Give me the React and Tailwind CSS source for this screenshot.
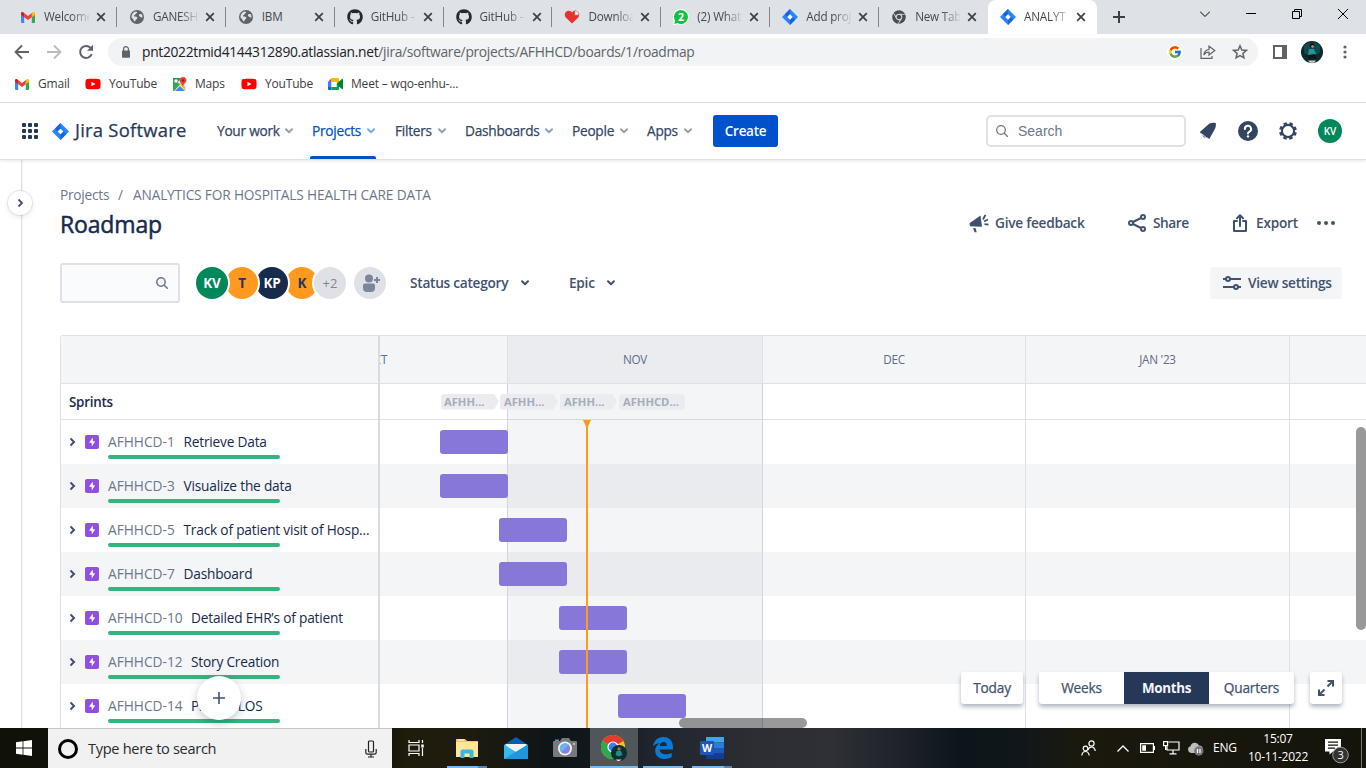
import React from "react";
import { FaGithub, FaYoutube, FaChrome } from "react-icons/fa";
import { FcGoogle } from "react-icons/fc";

const Chevron = ({ className = "" }) => (
  <svg viewBox="0 0 10 8" className={"h-2 w-2.5 shrink-0 " + className} fill="none" stroke="currentColor" strokeWidth="2" strokeLinecap="round" strokeLinejoin="round">
    <path d="M2 2.3 5 5.3 8 2.3" />
  </svg>
);

const GmailIcon = () => (
  <svg viewBox="0 0 14 11" className="h-[11px] w-[14px]">
    <path d="M0 2v8a1 1 0 0 0 1 1h2.2V4.6z" fill="#4285f4" />
    <path d="M14 2v8a1 1 0 0 1-1 1h-2.200V4.600z" fill="#34a853" />
    <path d="M10.800 1v4.200L14 2.800V1.500C14 .1 12.500-.3 11.600.4z" fill="#fbbc04" />
    <path d="M3.200 5.200V1L7 3.900 10.800 1v4.200L7 8z" fill="#ea4335" />
    <path d="M0 1.500v1.300l3.200 2.400V1L2.400.4C1.500-.3 0 .1 0 1.500z" fill="#c5221f" />
  </svg>
);

const GlobeIcon = () => (
  <svg viewBox="0 0 14 14" className="size-[14px]">
    <circle cx="7" cy="7" r="7" fill="#5f6368" />
    <path d="M5.500 1.400c2 .4 2.200 1.200 1 1.900-1.300.6-.6 1.600-2 1.900-1.200.3-.5 1.400.7 1.400 1.800 0 2.300.8 2 1.900-.3 1-1.600 1-1.800 2.300-.1 1-1 .9-1.600-.2C3.200 9.400 2.900 8.200 1.400 7.400 1.500 4.200 3 2 5.500 1.400zM9.500 4.200c1-.2 1.800-.3 2.300.3.6.9.800 1.700.7 2.800-.6.9-1.600 0-2.400-.5C9 6.300 8.300 4.600 9.500 4.200z" fill="#dee1e6" />
  </svg>
);

const HeartIcon = () => (
  <svg viewBox="0 0 16 15" className="h-[14px] w-4">
    <path d="M8 14.500 1.300 8C-.6 6 0 1.200 4 .8c2-.2 3.300.8 4 2 .5-1 1.400-1.700 2.500-2L15.600 6c0 .9-.4 1.500-.9 2z" fill="#e5322d" />
    <path d="M10.800 1c1.300-.3 2.600.3 3.500 1.300.8 1 1.100 2 1.100 3.200h-4.600z" fill="#fff" stroke="#e5322d" strokeWidth=".7" />
  </svg>
);

const WhatsIcon = () => (
  <svg viewBox="0 0 16 16" className="size-4">
    <path d="M8 0a8 8 0 1 1-3.600 15.200L0 16l.9-4.200A8 8 0 0 1 8 0z" fill="#fff" />
    <path d="M8 1a7 7 0 1 1-3.500 13.100L1.300 14.900l.7-3.300A7 7 0 0 1 8 1z" fill="#12c143" />
    <text x="8" y="11.800" textAnchor="middle" fontSize="10.500" fontWeight="700" fill="#fff" fontFamily="Open Sans, sans-serif">2</text>
  </svg>
);

const JiraIcon = ({ className = "size-4" }) => (
  <svg viewBox="0 0 16 16" className={className}>
    <path d="M8 0 16 8 8 16 0 8z" fill="#2684ff" />
    <path d="M8 0v5.200L5.200 8 2.700 5.300z" fill="#0f5fdb" opacity=".8" />
    <path d="M8 16v-5.200L10.800 8l2.500 2.700z" fill="#0f5fdb" opacity=".8" />
    <path d="M8 5.300 10.700 8 8 10.700 5.300 8z" fill="#fff" />
  </svg>
);

const MapsIcon = () => (
  <svg viewBox="0 0 15 15" className="size-[15px]">
    <path d="M1.500 1.500h7L11 8l3 1v5H1.500z" fill="#e8eaed" />
    <path d="M1 1h8L1 11z" fill="#1e9e57" />
    <path d="M1 11V1.500l7 6L2 14c-.6 0-1-.5-1-1z" fill="#34a853" />
    <path d="M3 14l5-5 5 5z" fill="#4285f4" />
    <path d="M7 6.500 13 13v-3L9 6z" fill="#fbbc04" />
    <circle cx="4" cy="4" r="1.700" fill="#fff" />
    <path d="M11 0c2 0 3.500 1.500 3.500 3.300C14.500 5.500 11.700 6.500 11 10c-.7-3.500-3.500-4.500-3.500-6.700C7.500 1.500 9 0 11 0z" fill="#ea4335" />
    <circle cx="11" cy="3.400" r="1.200" fill="#8c1d18" />
  </svg>
);

const MeetIcon = () => (
  <svg viewBox="0 0 15 12" className="h-3 w-[15px]">
    <path d="M3.500 0v4H0z" fill="#ea4335" />
    <path d="M0 4h3.500v5H0z" fill="#2684fc" />
    <path d="M0 9h3.500v3H1a1 1 0 0 1-1-1z" fill="#0066da" />
    <path d="M3.500 0H10a1 1 0 0 1 1 1v4L8.500 6.500V4h-5z" fill="#ffba00" />
    <path d="M3.500 12V9h5V6.500L11 6v5a1 1 0 0 1-1 1z" fill="#00ac47" />
    <path d="M11 3.500 14 1c.5-.4 1-.2 1 .4v9.200c0 .6-.5.8-1 .4L11 8.500 8.500 6z" fill="#00832d" />
    <path d="M3.500 4h5v5h-5z" fill="#fff" />
  </svg>
);

const CloseX = () => (
  <svg viewBox="0 0 10 10" className="size-[10px] shrink-0" stroke="#3c4043" strokeWidth="1.700">
    <path d="M1.200 1.200 8.800 8.800M8.800 1.200 1.200 8.800" />
  </svg>
);

const github = <FaGithub className="size-4 text-[#24292f]" />;
const tabs = [
  { icon: <GmailIcon />, title: "Welcome" },
  { icon: <GlobeIcon />, title: "GANESH" },
  { icon: <GlobeIcon />, title: "IBM" },
  { icon: github, title: "GitHub -" },
  { icon: github, title: "GitHub -" },
  { icon: <HeartIcon />, title: "Downloa" },
  { icon: <WhatsIcon />, title: "(2) What" },
  { icon: <JiraIcon />, title: "Add proj" },
  { icon: <FaChrome className="size-[14px] text-[#4a4d51]" />, title: "New Tab" },
  { icon: <JiraIcon />, title: "ANALYT", active: true },
];

function TabStrip() {
  return (
    <div className="flex h-[34px] shrink-0 bg-[#dee1e6] pl-2">
      {tabs.map((t, i) => (
        <div key={i} className={"relative flex h-[34px] w-[108.9px] shrink-0 items-center pl-3 " + (t.active ? "rounded-t-lg bg-white" : "")}>
          <span className="flex w-4 shrink-0 items-center justify-center">{t.icon}</span>
          <span className={"ml-2 w-[45px] whitespace-nowrap text-[11.700px] tracking-[-0.2px] text-[#45494d] " + (t.title === "IBM" ? "" : "[mask-image:linear-gradient(90deg,#000_60%,#0000_104%)]")}>{t.title}</span>
          <span className="ml-[7px] flex"><CloseX /></span>
          {!t.active && i < 8 && <span className="absolute right-0 top-[7px] h-5 w-px bg-[#80868b]" />}
        </div>
      ))}
      <svg viewBox="0 0 14 14" className="ml-[15px] mt-2.5 size-[14px]" stroke="#3c4043" strokeWidth="2"><path d="M7 1v12M1 7h12" /></svg>
      <div className="ml-auto mt-2 flex h-3 items-center gap-9 pr-[18px] text-black">
        <svg viewBox="0 0 10 6" className="h-1.5 w-2.5" fill="none" stroke="currentColor"><path d="M0 .5 5 5.500 10 .5" /></svg>
        <svg viewBox="0 0 10 2" className="h-0.5 w-2.5" stroke="currentColor"><path d="M0 .5h10" /></svg>
        <svg viewBox="0 0 10 10" className="size-2.5" fill="none" stroke="currentColor"><path d="M.5 2.500h7v7h-7zM2.500 2.500V.5h7v7h-2" /></svg>
        <svg viewBox="0 0 10 10" className="size-2.5" fill="none" stroke="currentColor"><path d="M0 0 10 10M10 0 0 10" /></svg>
      </div>
    </div>
  );
}

function AddressBar() {
  return (
    <div className="flex h-9 shrink-0 items-center pl-[14px] text-[#5f6368]">
      <svg viewBox="0 0 16 16" className="size-4" fill="none" stroke="currentColor" strokeWidth="1.800"><path d="M15 8H2M8 1.500 1.500 8 8 14.500" /></svg>
      <svg viewBox="0 0 16 16" className="ml-4 size-4 text-[#b9bbbe]" fill="none" stroke="currentColor" strokeWidth="1.800"><path d="M1 8h13M8 1.500 14.500 8 8 14.500" /></svg>
      <svg viewBox="0 0 16 16" className="ml-4 size-4" fill="none" stroke="currentColor" strokeWidth="2"><path d="M13.700 10.200A6 6 0 1 1 12.500 3.800L14 5.500" /><path d="M15 .8v6H9z" fill="currentColor" stroke="none" /></svg>
      <div className="ml-[14px] flex h-7 w-[1150px] items-center rounded-full bg-[#f1f3f4] pl-[14px]">
        <svg viewBox="0 0 8 12" className="h-3 w-2"><path d="M0 4.500h8V11a.8.8 0 0 1-.8.8H.8A.8.8 0 0 1 0 11z" fill="#5f6368" /><path d="M1.600 5V3a2.400 2.400 0 0 1 4.800 0v2" fill="none" stroke="#5f6368" strokeWidth="1.200" /></svg>
        <span className="ml-3 whitespace-nowrap pt-px text-[13.800px] tracking-[-0.3px]"><span className="text-[#202124]">pnt2022tmid4144312890.atlassian.net</span>/jira/software/projects/AFHHCD/boards/1/roadmap</span>
        <span className="ml-auto flex size-4 items-center justify-center rounded-full bg-white"><FcGoogle className="size-[14px]" /></span>
        <svg viewBox="0 0 16 14" className="ml-[17px] h-[14px] w-4" fill="none" stroke="currentColor" strokeWidth="1.200"><path d="M1 3v10.300h11V11M9 4.500V1.200L14.800 5.500 9 10V7C6.500 7 5 8 3.800 10 4.200 7 6 4.800 9 4.500z" /></svg>
        <svg viewBox="0 0 16 16" className="ml-4 mr-[10px] size-4" fill="none" stroke="currentColor" strokeWidth="1.500"><path d="M8 1.800 9.800 6l4.500.4-3.400 3 1 4.400L8 11.500l-3.900 2.300 1-4.400-3.400-3L6.200 6z" /></svg>
      </div>
      <svg viewBox="0 0 14 14" className="ml-[15px] size-[14px]"><path d="M0 0h14v14H0zM2 2v10h7V2z" fill="#5f6368" fillRule="evenodd" /></svg>
      <svg viewBox="0 0 22 22" className="ml-[14px] size-[22px]">
        <circle cx="11" cy="11" r="11" fill="#0d2b2f" />
        <path d="M3 5c4-4 12-5 16 0v6c-4 5-12 4-16 1z" fill="#114a4c" />
        <circle cx="11" cy="4.500" r="2.300" fill="#151515" /><circle cx="11.500" cy="5.500" r="1.300" fill="#c69a86" />
        <path d="M8 8h5l2 5-3 3-5-2z" fill="#26949a" />
        <path d="M7 14l7-1 2 5h-3l-2-2-3 3z" fill="#11151a" />
        <path d="M7 19.500h8l-2 2.200H9z" fill="#d7c6cc" />
      </svg>
      <svg viewBox="0 0 4 14" className="ml-5 h-[14px] w-1" fill="#5f6368"><circle cx="2" cy="2" r="1.600" /><circle cx="2" cy="7" r="1.600" /><circle cx="2" cy="12" r="1.600" /></svg>
    </div>
  );
}

const youtube = <FaYoutube className="size-[16px] text-[#ff0000]" />;
function Bookmarks() {
  const items = [
    ["w-[71px]", <GmailIcon key="a" />, "Gmail"],
    ["w-[86px]", youtube, "YouTube"],
    ["w-[70px]", <MapsIcon key="c" />, "Maps"],
    ["w-[86px]", youtube, "YouTube"],
    ["w-[140px]", <MeetIcon key="e" />, "Meet – wqo-enhu-..."],
  ];
  return (
    <div className="flex h-[33px] shrink-0 items-center border-b border-[#dadce0] pb-1 pl-[14px] text-[12px] tracking-[-0.18px] text-[#3c4043]">
      {items.map(([w, icon, label], i) => (
        <div key={i} className={"flex shrink-0 items-center whitespace-nowrap " + w}>
          <span className="mr-2 flex w-4 items-center justify-center">{icon}</span>{label}
        </div>
      ))}
    </div>
  );
}

const navItems = [
  ["w-[95px]", "w-[66px]", "Your work"],
  ["w-[83px]", "w-[53px]", "Projects"],
  ["w-[70px]", "w-[41px]", "Filters"],
  ["w-[107px]", "w-[78px]", "Dashboards"],
  ["w-[75px]", "w-[46px]", "People"],
  ["w-[66px]", "w-[35px]", "Apps"],
];

function JiraNav() {
  return (
    <div className="relative z-10 flex h-[56px] shrink-0 items-center bg-white pl-[22px] text-[#344563] shadow-[0_1px_0_#dfe1e6,0_2px_3px_#091e421c]">
      <svg viewBox="0 0 16 16" className="size-4" fill="#253858">
        {[0, 6, 12].map((y) => [0, 6, 12].map((x) => <rect key={x + "-" + y} x={x} y={y} width="4" height="4" rx="1" />))}
      </svg>
      <JiraIcon className="ml-[14px] size-[17px]" />
      <span className="ml-[6px] w-[142px] whitespace-nowrap pb-0.5 text-[18.400px] tracking-[0.25px] text-[#253858] [-webkit-text-stroke:0.25px]">Jira Software</span>
      {navItems.map(([w, tw, label]) => {
        const on = label === "Projects";
        return (
          <div key={label} className={"relative flex h-14 shrink-0 items-center whitespace-nowrap text-[13.700px] tracking-[-0.26px] [-webkit-text-stroke:0.25px] " + w + (on ? " text-[#0052cc]" : "")}>
            <span className={"pt-px " + tw}>{label}</span>
            <Chevron className="ml-px opacity-50" />
            {on && <span className="absolute -left-0.5 bottom-0 h-[3px] w-[66px] rounded-t-xs bg-[#0052cc]" />}
          </div>
        );
      })}
      <button className="h-8 w-[65px] rounded-[3px] bg-[#0052cc] text-[13.500px] font-semibold tracking-[-0.3px] text-white">Create</button>
      <div className="ml-auto flex h-8 w-[200px] items-center rounded-[5px] border-2 border-[#dfe1e6] pl-2 font-['Liberation_Sans',sans-serif] text-sm text-[#6b778c]">
        <svg viewBox="0 0 12 12" className="mr-2.5 size-3" fill="none" stroke="#6b778c" strokeWidth="1.300"><circle cx="5" cy="5" r="4.300" /><path d="M8.200 8.200 11.500 11.500" strokeLinecap="round" /></svg>
        Search
      </div>
      <svg viewBox="0 0 18 18" className="ml-[13px] size-[18px]" fill="#344563"><path d="M10.500 1.600c2-.9 4-1 6.300-.6.3 2.500 0 4.700-1.200 6.600L10.300 17 8 15.300C6.300 16 4.500 15.500 3.900 13.700L.8 10z" /><path d="M2.500 11.600 7.200 15.600" stroke="#fff" strokeWidth=".9" /></svg>
      <svg viewBox="0 0 20 20" className="ml-[21px] size-5"><circle cx="10" cy="10" r="10" fill="#344563" /><path d="M6.900 8a3.100 3.100 0 1 1 4.600 2.600c-1 .6-1.500 1-1.500 2" fill="none" stroke="#fff" strokeWidth="2" strokeLinecap="round" /><circle cx="10" cy="15.400" r="1.200" fill="#fff" /></svg>
      <svg viewBox="0 0 18 18" className="ml-[21px] size-[18px]" fill="none" stroke="#344563"><circle cx="9" cy="9" r="6.100" strokeWidth="2.200" /><circle cx="9" cy="9" r="7.700" strokeWidth="2.400" strokeDasharray="3.400 2.648" strokeDashoffset="-1.300" /></svg>
      <span className="ml-[21px] mr-6 flex size-6 items-center justify-center rounded-full bg-[#00875a] text-[10px] font-semibold text-white">KV</span>
    </div>
  );
}

const Avatar = ({ cls, children }) => (
  <span className={"relative -ml-0.5 flex size-8 shrink-0 items-center justify-center rounded-full text-[13.500px] font-bold tracking-[-0.2px] ring-2 ring-white " + cls}>{children}</span>
);

function PageHeader() {
  return (
    <>
      <div className="flex h-5 items-center pt-px text-[13.700px] tracking-[-0.16px] text-[#6b778c]">
        <span className="w-[58px] tracking-[-0.25px]">Projects</span><span className="w-[15px]">/</span>
        <span className="whitespace-nowrap">ANALYTICS FOR HOSPITALS HEALTH CARE DATA</span>
      </div>
      <div className="flex h-10 items-center text-[#42526e]">
        <h1 className="mb-0.5 mr-auto text-[23px] tracking-[-0.15px] text-[#172b4d] [-webkit-text-stroke:0.5px]">Roadmap</h1>
        <svg viewBox="0 0 20 19" className="mb-1 h-[19px] w-5" fill="#42526e"><path d="M11.500 1.500 13 12.800 1 12.300.5 9.300z" /><path d="M4 14l2.700.2 1 4H5.500z" /><path d="M14 5.500 16.500.8M15 7.500l4-2M15.500 10.200l4 .5" stroke="#42526e" strokeWidth="1.800" /></svg>
        <span className="mb-1 ml-[6px] w-[133px] text-[13.700px] font-semibold tracking-[-0.26px]">Give feedback</span>
        <svg viewBox="0 0 18 18" className="mb-1 size-[18px]" fill="none" stroke="#42526e" strokeWidth="2"><circle cx="3" cy="9" r="2" /><circle cx="15" cy="3" r="2" /><circle cx="15" cy="15" r="2" /><path d="m5 8 8-4M5 10l8 4" /></svg>
        <span className="mb-1 ml-[7px] w-[80px] text-[13.700px] font-semibold tracking-[-0.45px]">Share</span>
        <svg viewBox="0 0 14 18" className="mb-1 h-[18px] w-[14px]" fill="none" stroke="#42526e" strokeWidth="2" strokeLinecap="round" strokeLinejoin="round"><path d="M4 7H1v10h12V7h-3M7 12V1.500M4 4.200l3-3 3 3" /></svg>
        <span className="mb-1 ml-[9px] w-[61px] text-[13.700px] font-semibold tracking-[-0.26px]">Export</span>
        <svg viewBox="0 0 18 4" className="mb-1 mr-[31px] h-1 w-[18px]" fill="#42526e"><circle cx="2" cy="2" r="2" /><circle cx="9" cy="2" r="2" /><circle cx="16" cy="2" r="2" /></svg>
      </div>
      <div className="mt-[18px] flex h-10 items-center text-[#42526e]">
        <div className="mr-[18px] flex h-10 w-[120px] items-center justify-end rounded-[3px] border-2 border-[#dfe1e6] bg-[#fafbfc] pr-2.5">
          <svg viewBox="0 0 12 12" className="size-3" fill="none" stroke="#6b778c" strokeWidth="1.500"><circle cx="5" cy="5" r="4.200" /><path d="M8.200 8.200 11.300 11.300" strokeLinecap="round" /></svg>
        </div>
        <Avatar cls="z-[4] bg-[#00875a] text-white">KV</Avatar>
        <Avatar cls="z-[3] bg-[#ff991f] text-[#253858]">T</Avatar>
        <Avatar cls="z-[2] bg-[#172b4d] text-white">KP</Avatar>
        <Avatar cls="z-[1] bg-[#ff991f] text-[#253858]">K</Avatar>
        <span className="relative z-[2] -ml-1 flex size-8 items-center justify-center rounded-full bg-[#dfe1e6] pt-px text-[13px] text-[#7a869a] ring-2 ring-white">+2</span>
        <span className="ml-2 flex size-8 items-center justify-center rounded-full bg-[#dfe1e6]">
          <svg viewBox="0 0 18 19" className="ml-0.5 h-[19px] w-[18px]" fill="#7a869a"><circle cx="7" cy="4.500" r="4" /><path d="M1 11.500a2 2 0 0 1 2-2h8a2 2 0 0 1 2 2V14a4 4 0 0 1-4 4H5a4 4 0 0 1-4-4z" /><path d="M15 3v6M12 6h6" stroke="#7a869a" strokeWidth="2" /></svg>
        </span>
        <span className="ml-6 w-[110px] pt-px text-[13.700px] font-semibold tracking-[-0.28px]">Status category</span>
        <Chevron />
        <span className="ml-[39px] w-[37px] pt-px text-[13.700px] font-semibold tracking-[-0.28px]">Epic</span>
        <Chevron />
        <button className="ml-auto mr-6 flex h-8 w-[132px] items-center rounded-[3px] bg-[#f4f5f7] pl-[13px] text-[13.700px] font-semibold tracking-[-0.26px]">
          <svg viewBox="0 0 18 14" className="mr-[7px] h-[14px] w-[18px] shrink-0" fill="none" stroke="#42526e" strokeWidth="2"><circle cx="5" cy="3" r="2" /><path d="M0 3h3M7 3h11M0 11h11M15 11h3" /><circle cx="13" cy="11" r="2" /></svg>
          <span className="whitespace-nowrap pt-px">View settings</span>
        </button>
      </div>
    </>
  );
}

const epics = [
  { k: "AFHHCD-1", kw: "w-[75.5px]", title: "Retrieve Data", bar: "ml-[60px]" },
  { k: "AFHHCD-3", kw: "w-[75.5px]", title: "Visualize the data", bar: "ml-[60px]" },
  { k: "AFHHCD-5", kw: "w-[75.5px]", title: "Track of patient visit of Hosp...", bar: "ml-[119px]" },
  { k: "AFHHCD-7", kw: "w-[75.5px]", title: "Dashboard", bar: "ml-[119px]" },
  { k: "AFHHCD-10", kw: "w-[83px]", title: "Detailed EHR’s of patient", bar: "ml-[179px]" },
  { k: "AFHHCD-12", kw: "w-[83px]", title: "Story Creation", bar: "ml-[179px]" },
  { k: "AFHHCD-14", kw: "w-[83px]", title: "Predict LOS", bar: "ml-[238px]" },
];
const stripe = (i) => (i % 2 ? "bg-[#f4f5f7]" : "bg-white");

function EpicList() {
  return (
    <div className="w-[320px] shrink-0 border-l border-r-2 border-[#dfe1e6] border-r-[#d9dbe2]">
      <div className="h-12 border-b border-[#dfe1e6] bg-[#f4f5f7]" />
      <div className="flex h-9 items-center border-b border-[#dfe1e6] pl-2 pt-0.5 text-[13.400px] font-semibold tracking-[-0.25px] text-[#172b4d]">Sprints</div>
      {epics.map((e, i) => (
        <div key={e.k} className={"flex h-11 pl-2 " + stripe(i)}>
          <svg viewBox="0 0 8 10" className="mt-[17px] h-2.5 w-2" fill="none" stroke="#42526e" strokeWidth="2"><path d="M1.500 1.500 5 5 1.500 8.500" /></svg>
          <svg viewBox="0 0 14 14" className="ml-2 mt-[15px] size-[14px]"><rect width="14" height="14" rx="2" fill="#904ee2" /><path d="M7.800 2.600 4 7.700h2.700v3.700L10.200 6.300H7.800z" fill="#fff" /></svg>
          <div className="ml-[9px] flex flex-col">
            <div className="flex h-[35px] items-end whitespace-nowrap pb-0.5 text-[13.700px] tracking-[-0.2px] text-[#172b4d]">
              <span className={"tracking-[0.02px] text-[#6b778c] " + e.kw}>{e.k}</span>
              <span>{e.title}</span>
            </div>
            <div className="h-1 w-[172px] rounded-full bg-[#36b37e]" />
          </div>
        </div>
      ))}
    </div>
  );
}

const months = [
  ["w-[127px]", "", "bg-[#f4f5f7]", ""],
  ["w-[255px]", "bg-[#091e420b]", "bg-[#ebecf0]", "NOV"],
  ["w-[263px]", "", "bg-[#f4f5f7]", "DEC"],
  ["w-[264px]", "", "bg-[#f4f5f7]", "JAN '23"],
  ["w-[77px]", "", "bg-[#f4f5f7]", ""],
];
const sprints = [
  ["w-[58px] mr-px pl-[3px]", "AFHH...", true],
  ["w-[58px] mr-0.5 pl-1", "AFHH...", true],
  ["w-[57px] mr-0.5 pl-1", "AFHH...", true],
  ["w-[66px] rounded-r-[3px] pl-1", "AFHHCD...", false],
];

function Timeline() {
  return (
    <div className="relative min-w-0 flex-1 overflow-hidden">
      <div className="flex h-12 border-b border-[#dfe1e6] text-[11.700px] tracking-[-0.25px] text-[#5e6c84]">
        {months.map(([w, , bg, label], i) => (
          <div key={i} className={"flex shrink-0 items-center justify-center pt-px " + w + " " + bg + (i === 0 ? " justify-start" : " border-l border-[#dfe1e6]")}>
            {i === 0 ? <span className="-ml-[15px]">OCT</span> : label}
          </div>
        ))}
      </div>
      <div className="flex h-9 items-center border-b border-[#dfe1e6] pl-[61px]">
        {sprints.map(([cls, label, arrow], i) => (
          <div key={i} className={"z-[1] flex h-4 shrink-0 items-center rounded-l-[3px] bg-[#ebecf0] pt-px text-[11.200px] font-bold text-[#a5adba] " + cls + (arrow ? " [clip-path:polygon(0_0,calc(100%-5px)_0,100%_50%,calc(100%-5px)_100%,0_100%)]" : "")}>{label}</div>
        ))}
      </div>
      {epics.map((e, i) => (
        <div key={e.k} className={"flex h-11 items-center " + stripe(i)}>
          <div className={"z-[1] h-6 w-[68px] rounded-[3px] bg-[#8777d9] " + e.bar} />
        </div>
      ))}
      <div className="pointer-events-none absolute inset-x-0 bottom-0 top-12 flex">
        {months.map(([w, bg], i) => (
          <div key={i} className={"shrink-0 " + w + " " + bg + (i ? (i < 3 ? " border-l border-[#d3d4de]" : " border-l border-[#dfe1e6]") : "")} />
        ))}
      </div>
      <div className="absolute bottom-0 left-[203px] top-[84px] z-[2] flex w-2 flex-col items-center">
        <svg viewBox="0 0 8 7" className="h-[7px] w-2 shrink-0" fill="#ff991f"><path d="M0 0h8L4.800 7H3.200z" /></svg>
        <span className="w-0.5 flex-1 bg-[#ff991f]" />
      </div>
      <div className="absolute bottom-0 left-[299px] z-[3] h-2.5 w-32 rounded-full bg-black/40" />
      <div className="absolute right-0 top-[91px] z-[3] h-[203px] w-2.5 rounded-full bg-[#989898]" />
    </div>
  );
}

function ViewControls() {
  const box = "flex h-8 items-center justify-center overflow-hidden rounded-[3px] bg-white shadow-[0_3px_4px_#091e4250] ";
  return (
    <div className="absolute bottom-6 right-6 z-10 flex gap-4 text-[13.700px] tracking-[-0.2px] text-[#42526e] [-webkit-text-stroke:0.25px]">
      <div className={box + "w-[62px] pt-px"}>Today</div>
      <div className={box + "w-[255px]"}>
        <span className="flex-1 pt-px text-center">Weeks</span>
        <span className="flex h-8 w-[85px] items-center justify-center bg-[#253858] pt-px text-[13.400px] font-bold tracking-[-0.3px] text-[#f4f5f7] [-webkit-text-stroke:0]">Months</span>
        <span className="flex-1 pt-px text-center">Quarters</span>
      </div>
      <div className={box + "w-8"}>
        <svg viewBox="0 0 16 16" className="size-4" fill="none" stroke="#42526e" strokeWidth="2"><path d="M9.500 6.500 14 2M9.500 1H15v5.500M6.500 9.500 2 14M1 9.500V15h5.500" /></svg>
      </div>
    </div>
  );
}

function RoadmapPage() {
  return (
    <div className="relative flex min-h-0 flex-1 overflow-hidden bg-white">
      <div className="w-[22px] shrink-0 border-r border-[#dfe1e6] shadow-[1px_0_0_#f4f5f7]" />
      <span className="absolute left-2 top-8 flex size-6 items-center justify-center rounded-full bg-white shadow-[0_0_0_1px_#091e4214,0_2px_4px_1px_#091e4214]">
        <svg viewBox="0 0 8 10" className="size-2.5" fill="none" stroke="#42526e" strokeWidth="1.800"><path d="M2.500 1.500 6 5 2.500 8.500" /></svg>
      </span>
      <div className="flex min-w-0 flex-1 flex-col pl-[38px] pt-[26px]">
        <PageHeader />
        <div className="mt-8 flex min-h-0 flex-1 overflow-hidden rounded-tl-[3px] border-t border-[#dfe1e6]">
          <EpicList />
          <Timeline />
        </div>
      </div>
      <span className="absolute bottom-2 left-[197px] z-10 flex size-11 items-center justify-center rounded-full bg-white shadow-[0_3px_8px_#091e4240]">
        <svg viewBox="0 0 12 12" className="size-3" stroke="#42526e" strokeWidth="1.600"><path d="M6 0v12M0 6h12" /></svg>
      </span>
      <ViewControls />
    </div>
  );
}

const ExplorerIcon = () => (
  <svg viewBox="0 0 22 20" className="h-5 w-[22px]"><path d="M0 1h9l2 2h11v16H0z" fill="#f5c74d" /><path d="M0 4h22v15H0z" fill="#ffe694" /><path d="M2 2h6" stroke="#fff" /><path d="M4.500 20v-6.500a2 2 0 0 1 2-2h9a2 2 0 0 1 2 2V20h-4v-4.500H8.500V20z" fill="#3bb4ee" /></svg>
);
const MailIcon = () => (
  <svg viewBox="0 0 24 22" className="h-[22px] w-6"><path d="M0 8 12 0l12 8v3H0z" fill="#0b5cab" /><path d="M1.500 7h21v8h-21z" fill="#f3f3f3" /><path d="M0 7.500l12 7.500L24 7.500V22H0z" fill="#35b8f1" /><path d="M0 22 24 7.500V22z" fill="#1d97e0" /></svg>
);
const CameraIcon = () => (
  <svg viewBox="0 0 24 20" className="h-5 w-6"><path d="M2 1.500h4V4H2z" fill="#2f9fd8" /><path d="M1 3h6l2-3h7l2 3h5a1 1 0 0 1 1 1v14a1 1 0 0 1-1 1H1a1 1 0 0 1-1-1V4a1 1 0 0 1 1-1z" fill="#78797c" /><circle cx="12" cy="10.500" r="7" fill="#f4f4f6" /><circle cx="12" cy="10.500" r="5.200" fill="#8b7fe6" /><path d="M8.300 6.800a5.200 5.200 0 0 1 7.400 0l-7.400 7.400a5.200 5.200 0 0 1 0-7.400z" fill="#65b5f0" /><circle cx="21" cy="6" r=".9" fill="#ddd" /></svg>
);
const ChromeIcon = () => (
  <svg viewBox="0 0 26 26" className="size-[26px]"><circle cx="12" cy="12" r="12" fill="#fbc116" /><path d="M12 12 1.600 6a12 12 0 0 1 20.800 0z" fill="#e33b2e" /><path d="M1.600 6A12 12 0 0 0 12 24l5.200-9L12 12z" fill="#2da94f" /><path d="M1.600 6h20.800L12 7z" fill="#e33b2e" /><circle cx="12" cy="12" r="5.600" fill="#fff" /><circle cx="12" cy="12" r="4.400" fill="#3b7ded" /><circle cx="18" cy="18" r="8" fill="#0c2f31" /><circle cx="18" cy="14" r="1.700" fill="#8d776d" /><path d="M15.500 16h4.500l1.500 4-4 1.500-3-1.500z" fill="#23898b" /><path d="M14.500 24.500h6l-2 1.500h-2z" fill="#ddd" /></svg>
);
const EdgeIcon = () => (
  <svg viewBox="0 0 20 22" className="h-[22px] w-5" fill="#0a7ad8"><path d="M0 9.500C.8 3.800 4.800 0 10.300 0 16.500 0 20 4.300 20 10v2.600H6.500c.3 3.200 3 4.700 6.200 4.700 2.400 0 4.300-.6 6-1.600v4.400C16.900 21.400 14.500 22 11.800 22 6 22 2.200 18.700 2.200 13.700c0-3.300 1.800-6 4.800-7.400C4.300 6.300 1.700 7.500 0 9.500zM6.700 9h7.200c0-2.300-1.100-3.900-3.300-3.900-2.100 0-3.600 1.500-3.900 3.900z" fillRule="evenodd" /></svg>
);
const WordIcon = () => (
  <svg viewBox="0 0 24 22" className="h-[22px] w-6"><path d="M6 0h18v5.500H6z" fill="#41a5ee" /><path d="M6 5.500h18V11H6z" fill="#2b7cd3" /><path d="M6 11h18v5.500H6z" fill="#185abd" /><path d="M6 16.500h18V22H6z" fill="#103f91" /><rect y="4" width="14" height="14" rx="1" fill="#1e55b8" /><text x="7" y="14.800" textAnchor="middle" fontSize="10.500" fontWeight="700" fill="#fff" fontFamily="Open Sans, sans-serif">W</text></svg>
);

const apps = [
  [<ExplorerIcon key="a" />, "", <><i className="h-0.5 w-[31px] bg-[#76b9ed]" /><i className="h-0.5 w-[9px] bg-[#5289b3]" /></>],
  [<MailIcon key="b" />, "", null],
  [<CameraIcon key="c" />, "", null],
  [<ChromeIcon key="d" />, "bg-[#50565a]", <i className="h-0.5 w-12 bg-[#76b9ed]" />],
  [<EdgeIcon key="e" />, "", <i className="h-0.5 w-10 bg-[#76b9ed]" />],
  [<WordIcon key="f" />, "", <><i className="h-0.5 w-8 bg-[#76b9ed]" /><i className="h-0.5 w-2 bg-[#5289b3]" /></>],
];

function Taskbar() {
  return (
    <div className="flex h-10 shrink-0 bg-[linear-gradient(90deg,#101108_0,#15140b_380px,#201c0c_410px,#1e1b0e_470px,#0e1518_550px,#11171b_590px,#20252d_650px,#2c2e33_760px,#2e3036_830px,#22242c_890px,#0b151a_960px,#10171a_1020px,#1b190e_1080px,#15140b_1366px)] text-white">
      <span className="flex w-12 items-center justify-center">
        <svg viewBox="0 0 16 16" className="size-4" fill="#fff"><path d="M0 2.200 6.600 1.300v6.300H0zM7.400 1.200 16 0v7.600H7.400zM0 8.400h6.600v6.300L0 13.800zM7.400 8.400H16V16l-8.600-1.200z" /></svg>
      </span>
      <div className="flex h-10 w-[344px] items-center border-t border-[#c4c6c0] bg-[#f1f1f1] pl-[10px] text-[#2b2b2b]">
        <span className="size-5 rounded-full border-[3px] border-black" />
        <span className="ml-[10px] text-[14.600px] tracking-[-0.32px]">Type here to search</span>
        <svg viewBox="0 0 12 18" className="ml-auto mr-[15px] h-[18px] w-3" fill="none" stroke="#222" strokeWidth="1.200"><rect x="3.500" y="1" width="5" height="11" rx="1" /><path d="M.8 9v3.500c0 1 .7 1.700 1.700 1.700h7c1 0 1.700-.7 1.700-1.700V9M6 14.500V17M3 17h6" /></svg>
      </div>
      <span className="flex w-[50px] items-center justify-center">
        <svg viewBox="0 0 17 16" className="mr-0.5 h-4 w-[17px]" fill="none" stroke="#fff" strokeWidth="1.200"><path d="M1 0v2.500h10V0M1 16v-2.500h10V16M1 5h10v6H1zM14.500 0v3M14.500 8v8" /><path d="M13.200 4.500h2.600v3h-2.600z" fill="#fff" stroke="none" /></svg>
      </span>
      {apps.map(([icon, bg, line], i) => (
        <div key={i} className={"relative mr-px flex w-12 shrink-0 items-center justify-center " + (i === 0 ? "ml-px " : "") + bg}>
          {icon}
          <span className="absolute inset-x-0 bottom-0 flex justify-center">{line}</span>
        </div>
      ))}
      <div className="ml-auto flex items-center text-[12px] tracking-[-0.25px]">
        <svg viewBox="0 0 15 16" className="h-4 w-[15px]" fill="none" stroke="#fff" strokeWidth="1.200"><circle cx="10.500" cy="3.500" r="2.600" /><path d="M7 10c.5-2 1.700-3 3.500-3s3.300 1.300 3.800 4" /><circle cx="4.500" cy="8.500" r="2.300" /><path d="M.8 15.500c.3-2.500 1.700-4 3.700-4s3.300 1.500 3.700 4" /></svg>
        <svg viewBox="0 0 12 7" className="ml-[21px] h-[7px] w-3" fill="none" stroke="#fff" strokeWidth="1.300"><path d="M.5 6.500 6 1l5.500 5.500" /></svg>
        <svg viewBox="0 0 15 10" className="ml-[11px] h-2.5 w-[15px]"><path d="M.6.600h12.800v8.800H.6z" fill="none" stroke="#fff" strokeWidth="1.200" /><path d="M2.200 2.200h3.800v5.600H2.200zM13.500 3H15v4h-1.500z" fill="#fff" /></svg>
        <svg viewBox="0 0 17 14" className="ml-2 h-[14px] w-[17px]" fill="none" stroke="#fff" strokeWidth="1.200"><path d="M5.500 1H16v8H4V5.500M10 9v3.500M6.500 12.800h7M.6.600h4v4h-4zM2.600 4.600V9" /></svg>
        <svg viewBox="0 0 17 14" className="ml-[7px] mt-0.5 h-[14px] w-[17px]"><path d="M4 11a3.500 3.500 0 0 1-.5-6.800A4.500 4.500 0 0 1 12 3.500 3.500 3.500 0 0 1 12 11z" fill="#bdbdbd" /><circle cx="11.800" cy="9" r="4.700" fill="#777" /><path d="M10.500 7v4M13 7v4" stroke="#fff" strokeWidth="1.200" /></svg>
        <span className="ml-[9px] w-9">ENG</span>
        <div className="flex w-[58px] flex-col items-center whitespace-nowrap leading-[18px]"><span>15:07</span><span>10-11-2022</span></div>
        <svg viewBox="0 0 25 26" className="ml-[18px] mt-1.5 h-[26px] w-[25px]"><path d="M0 1h16v12.500H8l-3.500 3v-3H0z" fill="#fff" /><path d="M3 4.200h10M3 7.200h10M3 10.200h7" stroke="#14130b" strokeWidth="1.200" /><circle cx="15.500" cy="17" r="7.800" fill="#333" stroke="#9a9a9a" strokeWidth="1" /><text x="15.500" y="21" textAnchor="middle" fontSize="11" fill="#fff" fontFamily="Open Sans, sans-serif">3</text></svg>
        <span className="ml-[11px] mr-1 h-10 w-px bg-[#77776f]" />
      </div>
    </div>
  );
}

export default function App() {
  return (
    <div className="flex h-[768px] w-[1366px] flex-col overflow-hidden bg-white font-['Open_Sans','Noto_Sans',sans-serif] leading-normal">
      <TabStrip />
      <AddressBar />
      <Bookmarks />
      <JiraNav />
      <RoadmapPage />
      <Taskbar />
    </div>
  );
}
